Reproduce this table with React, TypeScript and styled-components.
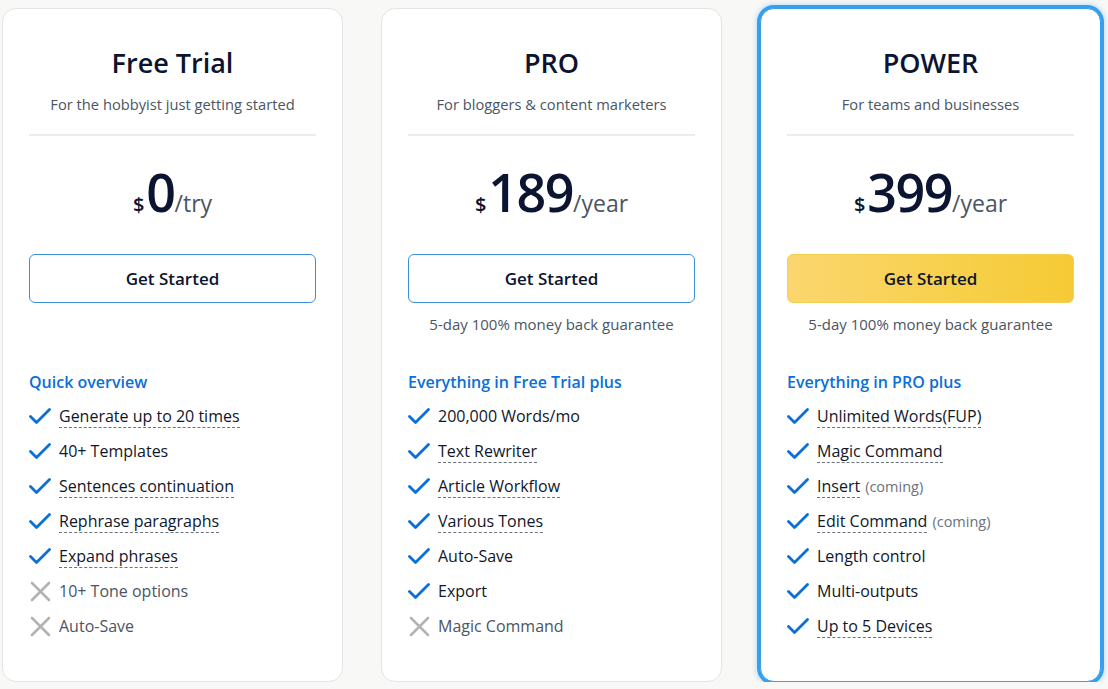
import React from 'react';
import styled, { createGlobalStyle, css } from 'styled-components';

const GlobalStyle = createGlobalStyle`
  html, body {
    margin: 0;
    padding: 0;
    background: #f8f8f6;
    font-family: "Open Sans", "Noto Sans", sans-serif;
    color: #0f172a;
  }
`;

interface Feature {
  label: string;
  ok: boolean;
  tip?: boolean;
  note?: string;
}

interface Plan {
  name: string;
  tagline: string;
  price: string;
  unit: string;
  guarantee: boolean;
  heading: string;
  featured?: boolean;
  features: Feature[];
}

const plans: Plan[] = [
  {
    name: 'Free Trial',
    tagline: 'For the hobbyist just getting started',
    price: '0',
    unit: '/try',
    guarantee: false,
    heading: 'Quick overview',
    features: [
      { label: 'Generate up to 20 times', ok: true, tip: true },
      { label: '40+ Templates', ok: true },
      { label: 'Sentences continuation', ok: true, tip: true },
      { label: 'Rephrase paragraphs', ok: true, tip: true },
      { label: 'Expand phrases', ok: true, tip: true },
      { label: '10+ Tone options', ok: false },
      { label: 'Auto-Save', ok: false },
    ],
  },
  {
    name: 'PRO',
    tagline: 'For bloggers & content marketers',
    price: '189',
    unit: '/year',
    guarantee: true,
    heading: 'Everything in Free Trial plus',
    features: [
      { label: '200,000 Words/mo', ok: true },
      { label: 'Text Rewriter', ok: true, tip: true },
      { label: 'Article Workflow', ok: true, tip: true },
      { label: 'Various Tones', ok: true, tip: true },
      { label: 'Auto-Save', ok: true },
      { label: 'Export', ok: true },
      { label: 'Magic Command', ok: false },
    ],
  },
  {
    name: 'POWER',
    tagline: 'For teams and businesses',
    price: '399',
    unit: '/year',
    guarantee: true,
    featured: true,
    heading: 'Everything in PRO plus',
    features: [
      { label: 'Unlimited Words(FUP)', ok: true, tip: true },
      { label: 'Magic Command', ok: true, tip: true },
      { label: 'Insert', ok: true, tip: true, note: '(coming)' },
      { label: 'Edit Command', ok: true, tip: true, note: '(coming)' },
      { label: 'Length control', ok: true },
      { label: 'Multi-outputs', ok: true },
      { label: 'Up to 5 Devices', ok: true, tip: true },
    ],
  },
];

const Page = styled.div`
  display: grid;
  grid-template-columns: repeat(3, 341px);
  gap: 38px;
  padding: 8px 0 0 2px;
`;

const Card = styled.section<{ $featured?: boolean }>`
  box-sizing: border-box;
  height: 674px;
  background: #fff;
  border: 1px solid #e3e4e6;
  border-radius: 14px;
  padding: 20px 26px 0;
  display: flex;
  flex-direction: column;
  ${(p) =>
    p.$featured &&
    css`
      border: 1px solid #3aa0ec;
      box-shadow: 0 0 0 3px #36a0ee, 0 0 5px 4px rgba(54, 160, 238, 0.3);
    `}
`;

const Title = styled.h2`
  margin: 14px 0 0;
  text-align: center;
  font-size: 27px;
  line-height: 40px;
  font-weight: 600;
  color: #0b1430;
`;

const Tagline = styled.p`
  margin: 11px 0 0;
  text-align: center;
  font-size: 14.7px;
  line-height: 20px;
  color: #4b5563;
`;

const Divider = styled.hr`
  margin: 20px 0 0;
  border: 0;
  border-top: 2px solid #ececee;
`;

const PriceRow = styled.div`
  margin-top: 26px;
  display: flex;
  justify-content: center;
  align-items: baseline;
  height: 60px;
  color: #0b1430;
`;

const Currency = styled.span`
  font-size: 20px;
  font-weight: 600;
  margin-right: 2px;
`;

const Amount = styled.span`
  font-size: 52px;
  line-height: 60px;
  font-weight: 600;
  letter-spacing: -1.5px;
`;

const Unit = styled.span`
  font-size: 23px;
  color: #4b5563;
`;

const Button = styled.button<{ $featured?: boolean }>`
  margin-top: 32px;
  height: 49px;
  width: 100%;
  border-radius: 6px;
  border: 1px solid #3b8fd9;
  background: #fff;
  font-family: inherit;
  font-size: 17px;
  font-weight: 600;
  color: #0b1430;
  cursor: pointer;
  ${(p) =>
    p.$featured &&
    css`
      border: 1px solid #f4cf52;
      background: linear-gradient(90deg, #fbd66f 0%, #f7d04a 60%, #f6ca36 100%);
    `}
`;

const Guarantee = styled.p`
  margin: 11px 0 0;
  height: 20px;
  text-align: center;
  font-size: 15px;
  line-height: 20px;
  color: #4b5563;
`;

const Heading = styled.h3`
  margin: 37px 0 0;
  font-size: 16px;
  line-height: 22px;
  font-weight: 600;
  color: #0a6fd8;
`;

const List = styled.ul`
  list-style: none;
  margin: 12px 0 0;
  padding: 0;
  display: flex;
  flex-direction: column;
  gap: 13px;
`;

const Item = styled.li<{ $ok: boolean }>`
  display: flex;
  align-items: center;
  gap: 8px;
  height: 22px;
  font-size: 16px;
  color: ${(p) => (p.$ok ? '#0f172a' : '#4b5563')};
`;

const IconBox = styled.span`
  width: 22px;
  height: 22px;
  display: flex;
  align-items: center;
  justify-content: center;
  flex-shrink: 0;
`;

const Label = styled.span<{ $tip?: boolean }>`
  line-height: 20px;
  ${(p) =>
    p.$tip &&
    css`
      border-bottom: 1px dashed #6b7280;
    `}
`;

const Note = styled.span`
  margin-left: 5px;
  font-size: 14.5px;
  color: #6b7280;
`;

const Check = () => (
  <svg width="22" height="18" viewBox="0 0 22 18">
    <path
      d="M1.5 9.5 L7.5 15.5 L20.5 2.5"
      fill="none"
      stroke="#0a6fd8"
      strokeWidth="2.8"
      strokeLinecap="round"
      strokeLinejoin="round"
    />
  </svg>
);

const Cross = () => (
  <svg width="21" height="21" viewBox="0 0 21 21">
    <path d="M2 2 L19 19 M19 2 L2 19" fill="none" stroke="#b3b3b3" strokeWidth="2.6" strokeLinecap="round" />
  </svg>
);

const PlanCard: React.FC<{ plan: Plan }> = ({ plan }) => (
  <Card $featured={plan.featured}>
    <Title>{plan.name}</Title>
    <Tagline>{plan.tagline}</Tagline>
    <Divider />
    <PriceRow>
      <Currency>$</Currency>
      <Amount>{plan.price}</Amount>
      <Unit>{plan.unit}</Unit>
    </PriceRow>
    <Button $featured={plan.featured}>Get Started</Button>
    <Guarantee>{plan.guarantee ? '5-day 100% money back guarantee' : ''}</Guarantee>
    <Heading>{plan.heading}</Heading>
    <List>
      {plan.features.map((f) => (
        <Item key={f.label} $ok={f.ok}>
          <IconBox>{f.ok ? <Check /> : <Cross />}</IconBox>
          <span>
            <Label $tip={f.tip}>{f.label}</Label>
            {f.note && <Note>{f.note}</Note>}
          </span>
        </Item>
      ))}
    </List>
  </Card>
);

export default function App() {
  return (
    <>
      <GlobalStyle />
      <Page>
        {plans.map((p) => (
          <PlanCard key={p.name} plan={p} />
        ))}
      </Page>
    </>
  );
}
